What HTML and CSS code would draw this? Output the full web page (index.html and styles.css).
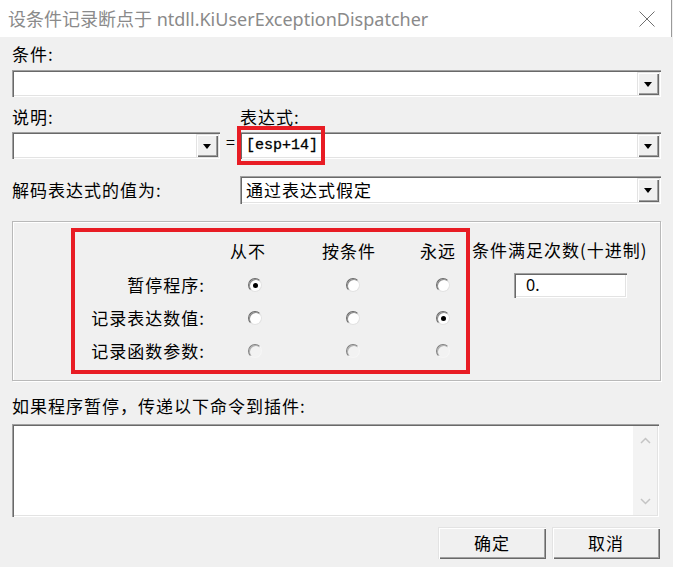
FILE: index.html
```html
<!DOCTYPE html>
<html lang="zh-CN">
<head>
<meta charset="utf-8">
<title>设条件记录断点</title>
<link rel="stylesheet" href="styles.css">
</head>
<body>
<div class="window">
  <div class="titlebar">
    <span class="title">设条件记录断点于 ntdll.KiUserExceptionDispatcher</span>
    <svg class="close" width="16" height="16" viewBox="0 0 16 16"><path d="M0.5 0.5L15.5 15.5M15.5 0.5L0.5 15.5" stroke="#6f6f6f" stroke-width="1" fill="none"/></svg>
  </div>
  <div class="content">
    <div class="label l-cond">条件:</div>
    <div class="combo c-cond">
      <div class="field"></div>
      <div class="dropbtn"><span class="tri"></span></div>
    </div>

    <div class="row labels-row">
      <div class="label w-left">说明:</div>
      <div class="label">表达式:</div>
    </div>
    <div class="row combo-row">
      <div class="combo c-desc">
        <div class="field"></div>
        <div class="dropbtn"><span class="tri"></span></div>
      </div>
      <div class="eq">=</div>
      <div class="combo c-expr">
        <div class="field mono">[esp+14]</div>
        <div class="dropbtn"><span class="tri"></span></div>
        <div class="hl"></div>
      </div>
    </div>

    <div class="row decode-row">
      <div class="label w-left">解码表达式的值为:</div>
      <div class="combo c-decode">
        <div class="field">通过表达式假定</div>
        <div class="dropbtn"><span class="tri"></span></div>
      </div>
    </div>

    <div class="group">
      <div class="redbox">
        <div class="grid">
          <div></div>
          <div class="hdr h2">从不</div>
          <div class="hdr h3">按条件</div>
          <div class="hdr h4">永远</div>

          <div class="rlabel">暂停程序:</div>
          <div class="cell c2"><span class="radio on"></span></div>
          <div class="cell c3"><span class="radio"></span></div>
          <div class="cell c4"><span class="radio"></span></div>

          <div class="rlabel">记录表达数值:</div>
          <div class="cell c2"><span class="radio"></span></div>
          <div class="cell c3"><span class="radio"></span></div>
          <div class="cell c4"><span class="radio on"></span></div>

          <div class="rlabel">记录函数参数:</div>
          <div class="cell c2"><span class="radio off"></span></div>
          <div class="cell c3"><span class="radio off"></span></div>
          <div class="cell c4"><span class="radio off"></span></div>
        </div>
      </div>
      <div class="countcol">
        <div class="label">条件满足次数(十进制)</div>
        <div class="count">0.</div>
      </div>
    </div>

    <div class="label l-cmd">如果程序暂停，传递以下命令到插件:</div>
    <div class="textarea">
      <div class="ta-field"></div>
      <div class="vscroll">
        <svg width="11" height="7" viewBox="0 0 11 7"><path d="M1 6L5.5 1.5L10 6" stroke="#c4c4c4" stroke-width="1.5" fill="none"/></svg>
        <svg width="11" height="7" viewBox="0 0 11 7"><path d="M1 1L5.5 5.5L10 1" stroke="#c4c4c4" stroke-width="1.5" fill="none"/></svg>
      </div>
    </div>

    <div class="buttons">
      <div class="btn">确定</div>
      <div class="btn">取消</div>
    </div>
  </div>
</div>
</body>
</html>
```

FILE: styles.css
```css
* { box-sizing: border-box; }
html, body { margin: 0; padding: 0; }
body {
  width: 673px;
  height: 567px;
  overflow: hidden;
  background: #f0f0f0;
  font-family: "Noto Sans CJK SC", "Noto Sans", sans-serif;
  font-size: 17px;
  color: #000;
}
.window { width: 673px; height: 567px; }

.titlebar {
  height: 37px;
  width: 672px;
  background: #fff;
  border-right: 1px solid #9a9a9a;
  display: flex;
  align-items: center;
  padding-left: 8px;
  padding-right: 16px;
}
.title {
  flex: 1;
  font-family: "Noto Sans", "Noto Sans CJK SC", sans-serif;
  font-size: 18px;
  color: #8a8a8a;
  line-height: 22px;
}
.close { display: block; }

.content { padding: 0 12px 0 12px; }

.label { font-size: 17px; line-height: 20px; white-space: nowrap; letter-spacing: 1px; }
.l-cond { margin-top: 7px; }

.combo {
  height: 27px;
  display: flex;
  background: #fff;
  padding: 2px;
  box-shadow: inset 1px 1px #a0a0a0, inset 2px 2px #696969, inset -1px -1px #ffffff, inset -2px -2px #e3e3e3;
}
.c-cond { margin-top: 6px; }
.field {
  flex: 1;
  padding-left: 4px;
  line-height: 23px;
  font-size: 17px;
  letter-spacing: 1px;
  white-space: nowrap;
}
.dropbtn {
  width: 22px;
  background: #f0f0f0;
  display: flex;
  align-items: center;
  justify-content: center;
  box-shadow: inset 1px 1px #e3e3e3, inset 2px 2px #ffffff, inset -1px -1px #696969, inset -2px -2px #a0a0a0;
}
.tri {
  width: 0; height: 0;
  border-left: 4px solid transparent;
  border-right: 4px solid transparent;
  border-top: 5px solid #000;
  margin-top: 1px;
}

.row { display: flex; }
.labels-row { margin-top: 10px; }
.w-left { width: 228px; }
.combo-row { margin-top: 5px; align-items: stretch; }
.c-desc { width: 208px; }
.eq { width: 20px; text-align: center; font-size: 16px; line-height: 18px; padding-left: 1px; }
.c-expr { flex: 1; position: relative; }
.mono {
  font-family: "Liberation Mono", "DejaVu Sans Mono", monospace;
  font-size: 15px;
  letter-spacing: 0;
  line-height: 23px;
  padding-left: 4px;
  -webkit-text-stroke: 0.3px #000;
}
.hl {
  position: absolute;
  left: -3px;
  top: -6px;
  width: 88px;
  height: 39px;
  border: 4px solid #e81c24;
}

.decode-row { margin-top: 17px; align-items: center; }
.c-decode { flex: 1; height: 28px; }

.group {
  margin-top: 17px;
  height: 160px;
  border: 1px solid #b9b9b9;
  box-shadow: inset 1px 1px #ffffff, 1px 1px #ffffff;
  display: flex;
  align-items: flex-start;
  padding: 6px 0 0 58px;
}
.redbox {
  border: 4px solid #e81c24;
  width: 399px;
  height: 146px;
}
.grid {
  display: grid;
  grid-template-columns: 130px 100px 96px 65px;
  grid-template-rows: 36px 33px 33px 33px;
  align-items: center;
}
.hdr { font-size: 17px; line-height: 20px; white-space: nowrap; padding-top: 2px; letter-spacing: 1px; }
.h2 { margin-left: 25px; }
.h3 { margin-left: 17px; }
.h4 { margin-left: 19px; }
.rlabel { text-align: right; font-size: 17px; line-height: 20px; white-space: nowrap; letter-spacing: 1px; }
.cell { display: flex; }
.c2, .c3 { justify-content: center; }
.c4 { padding-left: 35px; }

.radio {
  width: 14px; height: 14px;
  border-radius: 50%;
  background: #fff;
  border: 1px solid;
  border-color: #6a6a6a #e2e2e2 #e2e2e2 #6a6a6a;
  box-shadow: inset 1px 1px #8c8c8c;
  position: relative;
  display: block;
}
.radio.on::after {
  content: "";
  position: absolute;
  left: 4px; top: 4px;
  width: 5px; height: 5px;
  border-radius: 50%;
  background: #000;
}
.radio.off { background: #f2f2f2; border-color: #808080 #f6f6f6 #f6f6f6 #808080; box-shadow: inset 1px 1px #b0b0b0; }

.countcol { margin-left: 2px; padding-top: 12px; }
.count {
  margin-top: 13px;
  margin-left: 42px;
  width: 113px;
  height: 25px;
  background: #fff;
  box-shadow: inset 1px 1px #a0a0a0, inset 2px 2px #696969, inset -1px -1px #ffffff, inset -2px -2px #e3e3e3;
  padding-left: 12px;
  font-family: "Noto Sans", sans-serif;
  font-size: 16px;
  letter-spacing: 0;
  line-height: 25px;
}

.l-cmd { margin-top: 15px; }
.textarea {
  margin-top: 8px;
  height: 93px;
  width: 647px;
  display: flex;
  background: #fff;
  padding: 2px;
  box-shadow: inset 1px 1px #a0a0a0, inset 2px 2px #696969, inset -1px -1px #ffffff, inset -2px -2px #e3e3e3;
}
.ta-field { flex: 1; }
.vscroll {
  width: 24px;
  background: #f3f3f3;
  display: flex;
  flex-direction: column;
  justify-content: space-between;
  align-items: center;
  padding: 11px 0 10px;
}
.vscroll svg { display: block; }

.buttons {
  margin-top: 10px;
  display: flex;
  justify-content: flex-end;
  gap: 6px;
  padding-right: 1px;
}
.btn {
  width: 108px;
  height: 32px;
  background: #f0f0f0;
  box-shadow: inset 1px 1px #e3e3e3, inset 2px 2px #ffffff, inset -1px -1px #696969, inset -2px -2px #a0a0a0;
  text-align: center;
  font-size: 17px;
  letter-spacing: 1px;
  line-height: 32px;
}
```
